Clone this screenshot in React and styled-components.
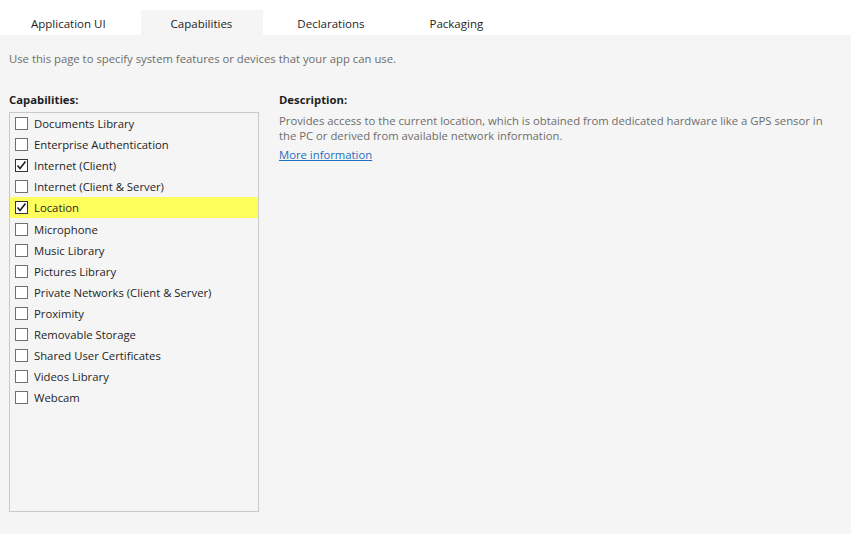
import React from "react";
import styled, { createGlobalStyle } from "styled-components";

const Global = createGlobalStyle`
  html, body { margin: 0; padding: 0; background: #f5f5f5; }
  body { font-family: "Open Sans", "Noto Sans", sans-serif; font-size: 11.3px; color: #1e1e1e; }
  * { box-sizing: border-box; }
`;

const Page = styled.div`
  width: 851px;
  height: 534px;
  display: flex;
  flex-direction: column;
  background: #f5f5f5;
  overflow: hidden;
`;

const TabBar = styled.div`
  height: 35px;
  background: #ffffff;
  display: flex;
  align-items: flex-end;
  gap: 4px;
  padding-left: 1px;
`;

const Tab = styled.div`
  height: 25px;
  padding: 1px 31px 0 30px;
  display: flex;
  align-items: center;
  font-size: 11.5px;
  color: #1e1e1e;
  background: ${(p) => (p.$active ? "#f5f5f5" : "transparent")};
  white-space: nowrap;
`;

const Content = styled.div`
  flex: 1;
  padding: 0 9px;
  display: flex;
  flex-direction: column;
`;

const Intro = styled.div`
  margin-top: 16px;
  height: 16px;
  line-height: 16px;
  color: #6d6d6d;
`;

const Columns = styled.div`
  margin-top: 25px;
  display: flex;
  gap: 20px;
`;

const Left = styled.div`
  width: 250px;
  display: flex;
  flex-direction: column;
`;

const Right = styled.div`
  flex: 1;
  display: flex;
  flex-direction: column;
  padding-right: 10px;
`;

const Label = styled.div`
  font-weight: 700;
  height: 16px;
  line-height: 16px;
  color: #1e1e1e;
`;

const ListBox = styled.div`
  margin-top: 4px;
  height: 400px;
  border: 1px solid #c9c9c9;
  padding: 0;
  display: flex;
  flex-direction: column;
`;

const Row = styled.label`
  height: 21.1px;
  flex: none;
  display: flex;
  align-items: center;
  gap: 6px;
  padding-left: 5px;
  background: ${(p) => (p.$highlight ? "#ffff5c" : "transparent")};
  color: #1e1e1e;
`;

const Box = styled.span`
  width: 13px;
  height: 13px;
  border: 1px solid ${(p) => (p.$checked ? "#333333" : "#707070")};
  background: #ffffff;
  display: flex;
  align-items: center;
  justify-content: center;
  flex: none;
`;

const DescText = styled.div`
  margin-top: 5px;
  color: #6d6d6d;
  line-height: 15px;
`;

const Link = styled.a`
  margin-top: 4px;
  color: #1e6fc0;
  text-decoration: underline;
  line-height: 15px;
  align-self: flex-start;
  cursor: pointer;
`;

const Check = () => (
  <svg width="11" height="11" viewBox="0 0 11 11">
    <path d="M1.5 5.5 L4 8.5 L9.5 1.5" fill="none" stroke="#1e1e1e" strokeWidth="1.6" />
  </svg>
);

const items = [
  ["Documents Library", false],
  ["Enterprise Authentication", false],
  ["Internet (Client)", true],
  ["Internet (Client & Server)", false],
  ["Location", true, true],
  ["Microphone", false],
  ["Music Library", false],
  ["Pictures Library", false],
  ["Private Networks (Client & Server)", false],
  ["Proximity", false],
  ["Removable Storage", false],
  ["Shared User Certificates", false],
  ["Videos Library", false],
  ["Webcam", false],
];

export default function App() {
  return (
    <Page>
      <Global />
      <TabBar>
        <Tab>Application UI</Tab>
        <Tab $active>Capabilities</Tab>
        <Tab>Declarations</Tab>
        <Tab>Packaging</Tab>
      </TabBar>
      <Content>
        <Intro>Use this page to specify system features or devices that your app can use.</Intro>
        <Columns>
          <Left>
            <Label>Capabilities:</Label>
            <ListBox>
              {items.map(([name, checked, hl]) => (
                <Row key={name} $highlight={hl}>
                  <Box $checked={checked}>{checked && <Check />}</Box>
                  {name}
                </Row>
              ))}
            </ListBox>
          </Left>
          <Right>
            <Label>Description:</Label>
            <DescText>
              Provides access to the current location, which is obtained from dedicated hardware like a GPS sensor in
              the PC or derived from available network information.
            </DescText>
            <Link>More information</Link>
          </Right>
        </Columns>
      </Content>
    </Page>
  );
}
